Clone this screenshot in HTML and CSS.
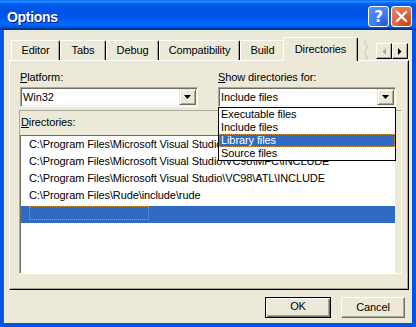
FILE: index.html
```html
<!DOCTYPE html>
<html>
<head>
<meta charset="utf-8">
<link rel="stylesheet" href="styles.css">
</head>
<body>
<div class="window">
  <div class="titlebar">
    <span class="title">Options</span>
    <div class="tb-buttons">
      <span class="tb-btn help">?</span>
      <span class="tb-btn close">
        <svg width="13" height="13" viewBox="0 0 13 13"><path d="M2 2 L11 11 M11 2 L2 11" stroke="#fff" stroke-width="2.2" stroke-linecap="square"/></svg>
      </span>
    </div>
  </div>
  <div class="client">
    <div class="tabs">
      <div class="tab t-editor">Editor</div>
      <div class="tab t-tabs">Tabs</div>
      <div class="tab t-debug">Debug</div>
      <div class="tab t-compat">Compatibility</div>
      <div class="tab t-build">Build</div>
      <div class="tab t-dirs active">Directories</div>
      <div class="tab-clip">
        <svg width="20" height="22" viewBox="0 0 20 22"><path d="M10 1 q-3 3 0 5 q3 2 0 5 q-3 3 0 5 q3 2 0 5" fill="none" stroke="#c9c6b6" stroke-width="1"/></svg>
      </div>
      <div class="tab-scroll">
        <span class="scroll-btn"><svg width="4" height="7" viewBox="0 0 4 7"><polygon points="4,0 4,7 0.5,3.5" fill="#ACA899"/></svg></span>
        <span class="scroll-btn"><svg width="4" height="7" viewBox="0 0 4 7"><polygon points="0,0 0,7 3.5,3.5" fill="#000"/></svg></span>
      </div>
    </div>
    <div class="panel">
      <div class="fields">
        <div class="field">
          <div class="label"><u>P</u>latform:</div>
          <div class="combo">
            <span class="combo-text">Win32</span>
            <span class="drop-btn"><svg width="7" height="4" viewBox="0 0 7 4"><polygon points="0,0 7,0 3.5,4" fill="#000"/></svg></span>
          </div>
        </div>
        <div class="field">
          <div class="label"><u>S</u>how directories for:</div>
          <div class="combo open">
            <span class="combo-text">Include files</span>
            <span class="drop-btn"><svg width="7" height="4" viewBox="0 0 7 4"><polygon points="0,0 7,0 3.5,4" fill="#000"/></svg></span>
            <div class="dropdown">
              <div class="dd-item">Executable files</div>
              <div class="dd-item">Include files</div>
              <div class="dd-item selected">Library files</div>
              <div class="dd-item">Source files</div>
            </div>
          </div>
        </div>
      </div>
      <div class="dirs">
        <div class="label"><u>D</u>irectories:</div>
        <div class="listbox">
          <div class="row">C:\Program Files\Microsoft Visual Studio\VC98\INCLUDE</div>
          <div class="row">C:\Program Files\Microsoft Visual Studio\VC98\MFC\INCLUDE</div>
          <div class="row">C:\Program Files\Microsoft Visual Studio\VC98\ATL\INCLUDE</div>
          <div class="row">C:\Program Files\Rude\include\rude</div>
          <div class="row selected"><span class="focus-box"></span></div>
        </div>
      </div>
    </div>
    <div class="buttons">
      <div class="btn default">OK</div>
      <div class="btn cancel">Cancel</div>
    </div>
  </div>
</div>
</body>
</html>
```
FILE: styles.css
```css
html, body {
  margin: 0;
  padding: 0;
}
body {
  width: 416px;
  height: 327px;
  overflow: hidden;
  font-family: "Liberation Sans", Arial, sans-serif;
  font-size: 11px;
  letter-spacing: -0.1px;
  color: #000;
  background: #0055E5;
}
.window {
  width: 416px;
  height: 327px;
  display: flex;
  flex-direction: column;
}
.titlebar {
  height: 30px;
  flex: none;
  display: flex;
  justify-content: space-between;
  align-items: flex-start;
  padding: 0 4px 0 7px;
  background: linear-gradient(to bottom, #0058EE 0%, #3593FF 4%, #288EFF 6%, #127DFF 8%, #036FFC 10%, #0262EE 14%, #0057E5 20%, #0054E3 24%, #0055EB 56%, #005BF5 66%, #026AFE 76%, #0062EF 86%, #0052D6 92%, #0040AB 94%, #003092 100%);
}
.title {
  color: #fff;
  font-weight: bold;
  font-size: 14px;
  letter-spacing: -0.3px;
  line-height: 14px;
  margin-top: 10px;
  text-shadow: 1px 1px 0 #0F1089;
}
.tb-buttons {
  display: flex;
  gap: 2px;
  margin-top: 6px;
}
.tb-btn {
  width: 21px;
  height: 21px;
  box-sizing: border-box;
  border: 1px solid #fff;
  border-radius: 3px;
  display: flex;
  align-items: center;
  justify-content: center;
  color: #fff;
}
.help {
  background: radial-gradient(circle at 80% 90%, #2957D6 0%, #3C7CF8 40%, #5B93FB 100%);
  font-family: "DejaVu Sans", sans-serif;
  font-weight: bold;
  font-size: 15px;
  letter-spacing: 0;
}
.close {
  background: radial-gradient(circle at 80% 90%, #CC4418 0%, #E0613C 45%, #EE8A6C 100%);
}
.client {
  flex: 1;
  background: #ECE9D8;
  border-style: solid;
  border-color: #0055E5;
  border-width: 0 4px 4px 3px;
  box-shadow: inset 1px 0 0 #1E63EC;
  display: flex;
  flex-direction: column;
}
.tabs {
  display: flex;
  align-items: flex-end;
  height: 24px;
  margin: 7px 0 -1px 8px;
  position: relative;
  z-index: 1;
}
.tab {
  height: 20px;
  box-sizing: border-box;
  margin-bottom: 1px;
  border-top: 1px solid #fff;
  border-left: 1px solid #fff;
  border-right: 1px solid #000;
  box-shadow: inset -1px 0 0 #ACA899;
  border-top-left-radius: 2px;
  border-top-right-radius: 2px;
  text-align: center;
  line-height: 18px;
  background: #ECE9D8;
  flex: none;
}
.t-editor { width: 49px; }
.t-tabs { width: 46px; }
.t-debug { width: 53px; }
.t-compat { width: 81px; }
.t-build { width: 45px; }
.t-dirs { width: 75px; }
.tab.active {
  height: 24px;
  margin: 0 -2px;
  padding-top: 2px;
  position: relative;
  z-index: 2;
}
.tab-clip {
  width: 20px;
  height: 22px;
  flex: none;
  align-self: flex-end;
}
.tab-clip svg { display: block; }
.tab-scroll {
  display: flex;
  margin-bottom: 2px;
  flex: none;
}
.scroll-btn {
  width: 16px;
  height: 16px;
  box-sizing: border-box;
  border: 1px solid;
  border-color: #fff #000 #000 #fff;
  box-shadow: inset -1px -1px 0 #ACA899;
  display: flex;
  align-items: center;
  justify-content: center;
  background: #ECE9D8;
}
.panel {
  margin-left: 6px;
  width: 400px;
  height: 230px;
  box-sizing: border-box;
  border: 1px solid;
  border-color: #fff #000 #000 #fff;
  box-shadow: inset -1px -1px 0 #ACA899;
  padding: 10px 0 0 10px;
  flex: none;
}
.fields {
  display: flex;
  gap: 20px;
}
.field {
  width: 178px;
}
.label {
  line-height: 13px;
  height: 13px;
  margin-bottom: 3px;
}
.combo {
  height: 20px;
  box-sizing: border-box;
  border: 1px solid;
  border-color: #ACA899 #fff #fff #ACA899;
  box-shadow: inset 1px 1px 0 #716F64, inset -1px -1px 0 #F1EFE2;
  background: #fff;
  display: flex;
  padding: 1px;
  position: relative;
}
.combo-text {
  flex: 1;
  line-height: 16px;
  padding-left: 1px;
}
.drop-btn {
  width: 17px;
  height: 16px;
  box-sizing: border-box;
  background: #ECE9D8;
  border: 1px solid;
  border-color: #ECE9D8 #716F64 #716F64 #ECE9D8;
  box-shadow: inset 1px 1px 0 #fff, inset -1px -1px 0 #ACA899;
  display: flex;
  align-items: center;
  justify-content: center;
}
.drop-btn svg { display: block; }
.dropdown {
  position: absolute;
  left: -1px;
  top: 19px;
  width: 178px;
  box-sizing: border-box;
  border: 1px solid #000;
  background: #fff;
  z-index: 5;
}
.dd-item {
  height: 13px;
  line-height: 13px;
  padding-left: 2px;
  box-sizing: border-box;
}
.dd-item.selected {
  background: #316AC5;
  color: #fff;
  outline: 1px dotted #CE953A;
  outline-offset: -1px;
}
.dirs {
  margin: 3px 0 0 -1px;
  width: 383px;
  height: 164px;
  box-sizing: border-box;
  border: 1px solid;
  border-color: #ACA899 #fff #fff #ACA899;
  padding-top: 5px;
}
.dirs .label {
  padding-left: 1px;
  margin-bottom: 6px;
}
.listbox {
  width: 375px;
  height: 138px;
  box-sizing: border-box;
  border-top: 1px solid #716F64;
  border-left: 1px solid #716F64;
  background: #fff;
  overflow: hidden;
}
.row {
  height: 17px;
  line-height: 17px;
  padding-left: 8px;
  white-space: nowrap;
}
.row.selected {
  background: #316AC5;
}
.focus-box {
  display: block;
  width: 120px;
  height: 14px;
  box-sizing: border-box;
  border: 1px dotted #CE953A;
  margin-top: 2px;
}
.buttons {
  display: flex;
  justify-content: flex-end;
  gap: 10px;
  margin: 7px 7px 0 0;
}
.btn {
  height: 21px;
  box-sizing: border-box;
  text-align: center;
  line-height: 17px;
  background: #ECE9D8;
  border: 1px solid;
  border-color: #fff #716F64 #716F64 #fff;
  box-shadow: inset -1px -1px 0 #ACA899;
}
.btn.default {
  width: 66px;
  border: 1px solid #000;
  box-shadow: inset 1px 1px 0 #fff, inset -1px -1px 0 #716F64, inset -2px -2px 0 #ACA899;
}
.btn.cancel {
  width: 64px;
  line-height: 19px;
}
```
